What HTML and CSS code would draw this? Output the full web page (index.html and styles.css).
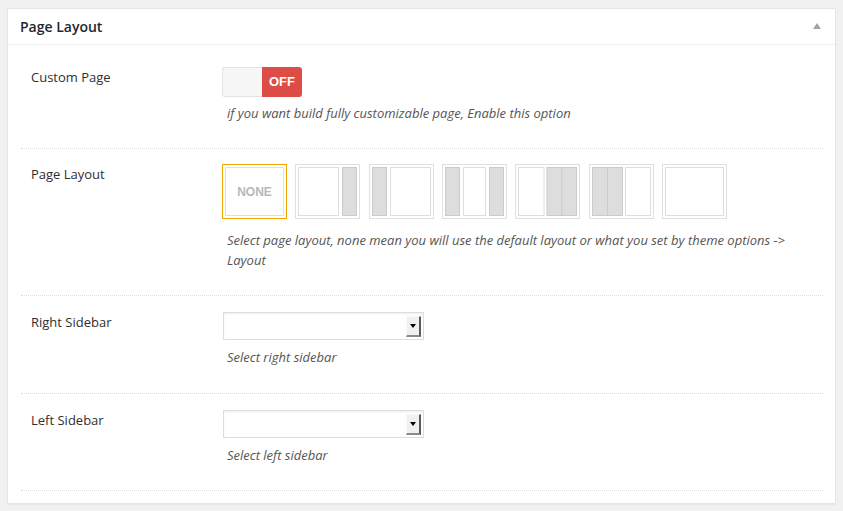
FILE: index.html
```html
<!DOCTYPE html>
<html>
<head>
<meta charset="utf-8">
<link rel="stylesheet" href="styles.css">
</head>
<body>
<div class="panel">
  <div class="panel-head">
    <h2 class="panel-title">Page Layout</h2>
    <span class="toggle-arrow"></span>
  </div>
  <div class="panel-body">
    <div class="row">
      <div class="label">Custom Page</div>
      <div class="field">
        <div class="switch">
          <span class="switch-on"></span>
          <span class="switch-off">OFF</span>
        </div>
        <div class="desc">if you want build fully customizable page, Enable this option</div>
      </div>
    </div>

    <div class="row row-layout">
      <div class="label">Page Layout</div>
      <div class="field">
        <div class="thumbs">
          <div class="thumb thumb-none"><span class="none-inner">NONE</span></div>
          <svg class="thumb" viewBox="0 0 65 55"><rect class="outer" x="0.5" y="0.5" width="64" height="54"/><rect class="w" x="3.5" y="3.5" width="40" height="48"/><rect class="g" x="47.5" y="3.5" width="14" height="48"/></svg>
          <svg class="thumb" viewBox="0 0 65 55"><rect class="outer" x="0.5" y="0.5" width="64" height="54"/><rect class="g" x="3.5" y="3.5" width="14" height="48"/><rect class="w" x="21.5" y="3.5" width="40" height="48"/></svg>
          <svg class="thumb" viewBox="0 0 65 55"><rect class="outer" x="0.5" y="0.5" width="64" height="54"/><rect class="g" x="3.5" y="3.5" width="14" height="48"/><rect class="w" x="21.5" y="3.5" width="22" height="48"/><rect class="g" x="47.5" y="3.5" width="14" height="48"/></svg>
          <svg class="thumb" viewBox="0 0 65 55"><rect class="outer" x="0.5" y="0.5" width="64" height="54"/><rect class="w" x="3.5" y="3.5" width="25.5" height="48"/><rect class="g" x="32" y="3.5" width="15" height="48"/><rect class="g" x="47" y="3.5" width="14.5" height="48"/></svg>
          <svg class="thumb" viewBox="0 0 65 55"><rect class="outer" x="0.5" y="0.5" width="64" height="54"/><rect class="g" x="3.5" y="3.5" width="15" height="48"/><rect class="g" x="18.5" y="3.5" width="15" height="48"/><rect class="w" x="36.5" y="3.5" width="25" height="48"/></svg>
          <svg class="thumb" viewBox="0 0 65 55"><rect class="outer" x="0.5" y="0.5" width="64" height="54"/><rect class="w" x="3.5" y="3.5" width="58" height="48"/></svg>
        </div>
        <div class="desc">Select page layout, none mean you will use the default layout or what you set by theme options -&gt; Layout</div>
      </div>
    </div>

    <div class="row row-select">
      <div class="label">Right Sidebar</div>
      <div class="field">
        <div class="select"><span class="select-btn"><span class="caret"></span></span></div>
        <div class="desc">Select right sidebar</div>
      </div>
    </div>

    <div class="row">
      <div class="label">Left Sidebar</div>
      <div class="field">
        <div class="select"><span class="select-btn"><span class="caret"></span></span></div>
        <div class="desc">Select left sidebar</div>
      </div>
    </div>
  </div>
</div>
</body>
</html>
```

FILE: styles.css
```css
html, body {
  margin: 0;
  padding: 0;
  background: #f1f1f1;
}
body {
  padding: 8px 7px;
  font-family: "Open Sans", "Liberation Sans", sans-serif;
  color: #444;
}
.panel {
  background: #fff;
  border: 1px solid #e5e5e5;
  box-shadow: 0 1px 1px rgba(0,0,0,0.04);
}
.panel-head {
  height: 35px;
  border-bottom: 1px solid #eee;
  display: flex;
  align-items: center;
  justify-content: space-between;
  padding: 0 14px 0 12px;
}
.panel-title {
  margin: 0;
  font-size: 14px;
  font-weight: 600;
  color: #23282d;
  line-height: 20px;
}
.toggle-arrow {
  width: 0;
  height: 0;
  border-left: 4px solid transparent;
  border-right: 4px solid transparent;
  border-bottom: 6px solid #a0a5aa;
  position: relative;
  top: -1px;
}
.panel-body {
  padding: 6px 12px 12px 13px;
}
.row {
  display: flex;
  padding: 16px 10px 25px 10px;
  border-bottom: 1px dotted #dcdcdc;
}
.row-layout {
  padding-top: 15px;
}
.row-select {
  padding-bottom: 26px;
}
.label {
  width: 191px;
  flex: none;
  font-size: 13px;
  line-height: 20px;
  color: #2f2f2f;
}
.field {
  flex: 1;
  min-width: 0;
  padding-right: 12px;
}
.desc {
  margin-top: 6px;
  padding-left: 5px;
  font-size: 13px;
  line-height: 20px;
  font-style: italic;
  color: #555;
}
.switch {
  display: flex;
  width: 80px;
  height: 30px;
}
.switch-on {
  width: 39px;
  height: 28px;
  background: #f7f7f7;
  border: 1px solid #e3e3e3;
  border-right: none;
  border-radius: 3px 0 0 3px;
}
.switch-off {
  width: 40px;
  height: 30px;
  background: #dd4d46;
  border-radius: 0 3px 3px 0;
  color: #fff;
  font-family: "Liberation Sans", Arial, sans-serif;
  font-weight: bold;
  font-size: 13px;
  line-height: 30px;
  text-align: center;
}
.thumbs {
  display: flex;
  gap: 8.33px;
  margin-bottom: 11px;
}
.thumb {
  width: 65px;
  height: 55px;
  display: block;
  flex: none;
}
.thumb .outer {
  fill: #fff;
  stroke: #e0e0e0;
  stroke-width: 1;
}
.thumb .w {
  fill: #fff;
  stroke: #dedede;
  stroke-width: 1;
}
.thumb .g {
  fill: #dddddd;
  stroke: #cbcbcb;
  stroke-width: 1;
}
.thumb-none {
  box-sizing: border-box;
  border: 1px solid #f0a500;
  padding: 2px;
}
.none-inner {
  box-sizing: border-box;
  display: flex;
  align-items: center;
  justify-content: center;
  width: 100%;
  height: 100%;
  border: 1px solid #e0e0e0;
  font-family: "Liberation Sans", Arial, sans-serif;
  font-weight: bold;
  font-size: 12px;
  color: #b8b8b8;
}
.select {
  box-sizing: border-box;
  width: 201px;
  height: 28px;
  margin-left: 1px;
  border: 1px solid #dddddd;
  box-shadow: inset 0 1px 2px rgba(0,0,0,0.07);
  background: #fff;
  display: flex;
  align-items: center;
  justify-content: flex-end;
  padding-right: 2px;
  margin-bottom: 7px;
}
.select-btn {
  box-sizing: border-box;
  width: 15px;
  height: 21px;
  background: #f0f0f0;
  border-top: 1px solid #fafafa;
  border-left: 1px solid #fafafa;
  border-right: 2px solid #5a5a5a;
  border-bottom: 2px solid #8a8a8a;
  display: flex;
  align-items: center;
  justify-content: center;
}
.caret {
  width: 0;
  height: 0;
  border-left: 3px solid transparent;
  border-right: 3px solid transparent;
  border-top: 4px solid #000;
  margin-top: 1px;
}
```
